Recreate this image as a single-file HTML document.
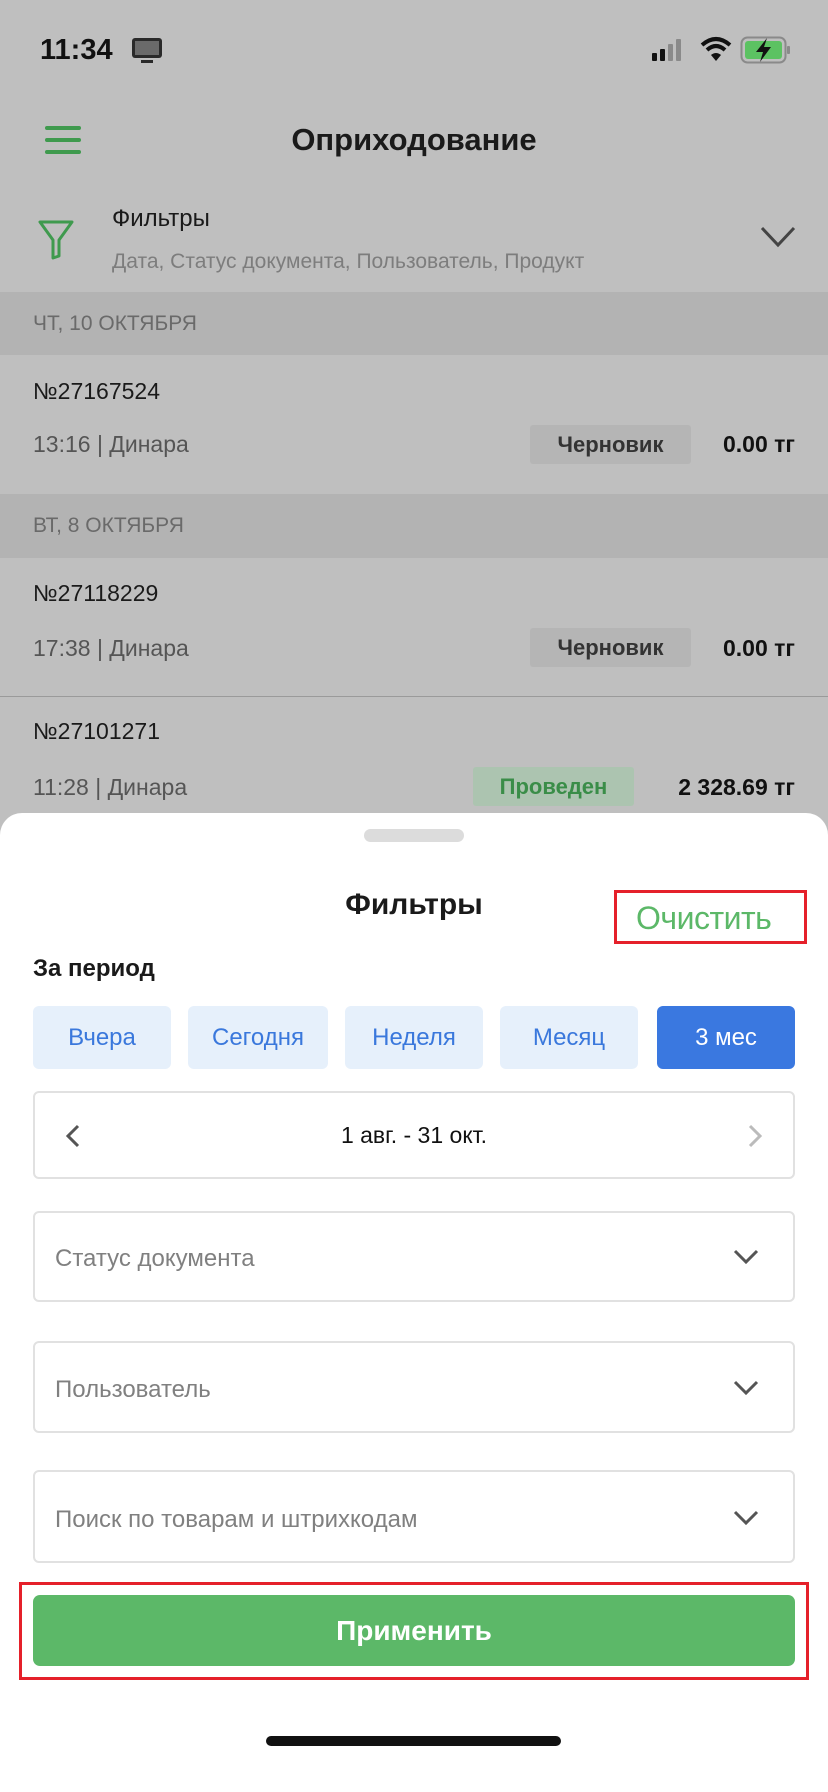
<!DOCTYPE html>
<html><head><meta charset="utf-8"><style>
*{margin:0;padding:0;box-sizing:border-box}
body{width:828px;height:1792px;background:#bfbfbf;font-family:"Liberation Sans",sans-serif;position:relative;overflow:hidden;color:#1a1a1a}
.a{position:absolute}
.sec{position:absolute;left:0;width:828px;background:#b3b3b3;color:#6a6a6a;font-size:21px;padding-left:33px;display:flex;align-items:center}
.num{position:absolute;left:33px;font-size:23px;color:#1a1a1a}
.meta{position:absolute;left:33px;font-size:23px;color:#555}
.chip{position:absolute;height:39px;border-radius:3px;font-size:22px;font-weight:bold;display:flex;align-items:center;justify-content:center}
.amt{position:absolute;right:33px;font-size:23px;font-weight:bold;color:#111}
.sheet{position:absolute;left:0;top:813px;width:828px;height:979px;background:#fff;border-radius:22px 22px 0 0}
.pill{position:absolute;top:1006px;height:63px;border-radius:6px;background:#e6f0fb;color:#3a78dc;font-size:24px;display:flex;align-items:center;justify-content:center}
.box{position:absolute;left:33px;width:762px;border:2px solid #e1e1e1;border-radius:6px;background:#fff}
.ph{position:absolute;left:20px;font-size:24px;color:#808080}
.chev{position:absolute;right:34px}
</style></head><body>
<div class="a" style="left:40px;top:34px;font-size:29px;font-weight:bold;color:#111">11:34</div>
<svg class="a" style="left:130px;top:36px" width="34" height="30" viewBox="0 0 34 30"><rect x="2" y="2" width="30" height="20" rx="3" fill="#2a2a2a"/><rect x="5" y="5" width="24" height="14" fill="#6a6a6a"/><rect x="11" y="24" width="12" height="3" fill="#2a2a2a"/></svg>
<svg class="a" style="left:652px;top:38px" width="40" height="24"><rect x="0" y="15" width="5" height="8" rx="1" fill="#111"/><rect x="8" y="11" width="5" height="12" rx="1" fill="#111"/><rect x="16" y="6" width="5" height="17" rx="1" fill="#8a8a8a"/><rect x="24" y="1" width="5" height="22" rx="1" fill="#8a8a8a"/></svg>
<svg class="a" style="left:700px;top:36px" width="32" height="26" viewBox="0 0 32 26"><path d="M2 9 Q16 -3 30 9" stroke="#111" stroke-width="4" fill="none"/><path d="M7 14 Q16 6 25 14" stroke="#111" stroke-width="4" fill="none"/><path d="M11 19 L16 25 L21 19 Q16 15 11 19Z" fill="#111"/></svg>
<svg class="a" style="left:740px;top:36px" width="52" height="28" viewBox="0 0 52 28"><rect x="1.5" y="1.5" width="44" height="25" rx="6" fill="none" stroke="#8a8a8a" stroke-width="2"/><rect x="5" y="5" width="37" height="18" rx="3" fill="#5cc262"/><rect x="47" y="10" width="3" height="8" rx="1" fill="#8a8a8a"/><path d="M27 2 L16 16 H23 L20 26 L31 11 H24 Z" fill="#111"/></svg>
<svg class="a" style="left:45px;top:126px" width="38" height="28"><rect x="0" y="0" width="36" height="4" rx="2" fill="#3f9a4e"/><rect x="0" y="12" width="36" height="4" rx="2" fill="#3f9a4e"/><rect x="0" y="24" width="36" height="4" rx="2" fill="#3f9a4e"/></svg>
<div class="a" style="left:0;width:828px;top:122px;text-align:center;font-size:31px;font-weight:bold;color:#1a1a1a">Оприходование</div>
<svg class="a" style="left:37px;top:218px" width="38" height="42" viewBox="0 0 38 42"><path d="M3 4 H35 L22 22 V38 L16 40 V22 Z" fill="none" stroke="#3f9a4e" stroke-width="3" stroke-linejoin="round"/></svg>
<div class="a" style="left:112px;top:205px;font-size:24px;color:#1a1a1a">Фильтры</div>
<div class="a" style="left:112px;top:250px;font-size:21px;color:#7d7d7d">Дата, Статус документа, Пользователь, Продукт</div>
<svg class="a" style="left:760px;top:225px" width="36" height="24"><path d="M2 3 L18 20 L34 3" fill="none" stroke="#444" stroke-width="3"/></svg>
<div class="sec" style="top:292px;height:63px">ЧТ, 10 ОКТЯБРЯ</div>
<div class="num" style="top:378px">№27167524</div>
<div class="meta" style="top:431px">13:16 | Динара</div>
<div class="chip" style="left:530px;top:425px;width:161px;background:#b5b5b5;color:#333">Черновик</div>
<div class="amt" style="top:431px">0.00 тг</div>
<div class="sec" style="top:494px;height:64px">ВТ, 8 ОКТЯБРЯ</div>
<div class="num" style="top:580px">№27118229</div>
<div class="meta" style="top:635px">17:38 | Динара</div>
<div class="chip" style="left:530px;top:628px;width:161px;background:#b5b5b5;color:#333">Черновик</div>
<div class="amt" style="top:635px">0.00 тг</div>
<div class="a" style="left:0;top:696px;width:828px;height:1px;background:#9a9a9a"></div>
<div class="num" style="top:718px">№27101271</div>
<div class="meta" style="top:774px">11:28 | Динара</div>
<div class="chip" style="left:473px;top:767px;width:161px;background:#acc4b0;color:#3a8d48">Проведен</div>
<div class="amt" style="top:774px">2 328.69 тг</div>
<div class="sheet"></div>
<div class="a" style="left:364px;top:829px;width:100px;height:13px;border-radius:7px;background:#dcdcdc"></div>
<div class="a" style="left:0;width:828px;top:888px;text-align:center;font-size:30px;font-weight:bold;color:#1a1a1a">Фильтры</div>
<div class="a" style="left:636px;top:900px;font-size:32px;color:#5cb868;letter-spacing:-0.5px">Очистить</div>
<div class="a" style="left:614px;top:890px;width:193px;height:54px;border:3px solid #e5202a"></div>
<div class="a" style="left:33px;top:955px;font-size:24px;font-weight:bold;color:#1a1a1a">За период</div>
<div class="pill" style="left:33px;width:138px">Вчера</div>
<div class="pill" style="left:188px;width:140px">Сегодня</div>
<div class="pill" style="left:345px;width:138px">Неделя</div>
<div class="pill" style="left:500px;width:138px">Месяц</div>
<div class="pill" style="left:657px;width:138px;background:#3a78e0;color:#fff">3 мес</div>
<div class="box" style="top:1091px;height:88px">
 <svg class="a" style="left:30px;top:31px" width="16" height="24"><path d="M13 2 L3 12 L13 22" fill="none" stroke="#555" stroke-width="3"/></svg>
 <div class="a" style="left:0;width:758px;top:29px;text-align:center;font-size:23px;color:#111">1 авг. - 31 окт.</div>
 <svg class="a" style="right:30px;top:31px" width="16" height="24"><path d="M3 2 L13 12 L3 22" fill="none" stroke="#bbb" stroke-width="3"/></svg>
</div>
<div class="box" style="top:1211px;height:91px"><div class="ph" style="top:32px">Статус документа</div><svg class="chev" style="top:36px" width="26" height="16"><path d="M2 2 L13 13 L24 2" fill="none" stroke="#555" stroke-width="3"/></svg></div>
<div class="box" style="top:1341px;height:92px"><div class="ph" style="top:33px">Пользователь</div><svg class="chev" style="top:37px" width="26" height="16"><path d="M2 2 L13 13 L24 2" fill="none" stroke="#555" stroke-width="3"/></svg></div>
<div class="box" style="top:1470px;height:93px"><div class="ph" style="top:34px">Поиск по товарам и штрихкодам</div><svg class="chev" style="top:38px" width="26" height="16"><path d="M2 2 L13 13 L24 2" fill="none" stroke="#555" stroke-width="3"/></svg></div>
<div class="a" style="left:33px;top:1595px;width:762px;height:71px;border-radius:7px;background:#5cb868;color:#fff;font-size:28px;font-weight:bold;display:flex;align-items:center;justify-content:center">Применить</div>
<div class="a" style="left:19px;top:1582px;width:790px;height:98px;border:3px solid #e5202a"></div>
<div class="a" style="left:266px;top:1736px;width:295px;height:10px;border-radius:5px;background:#111"></div>
</body></html>
